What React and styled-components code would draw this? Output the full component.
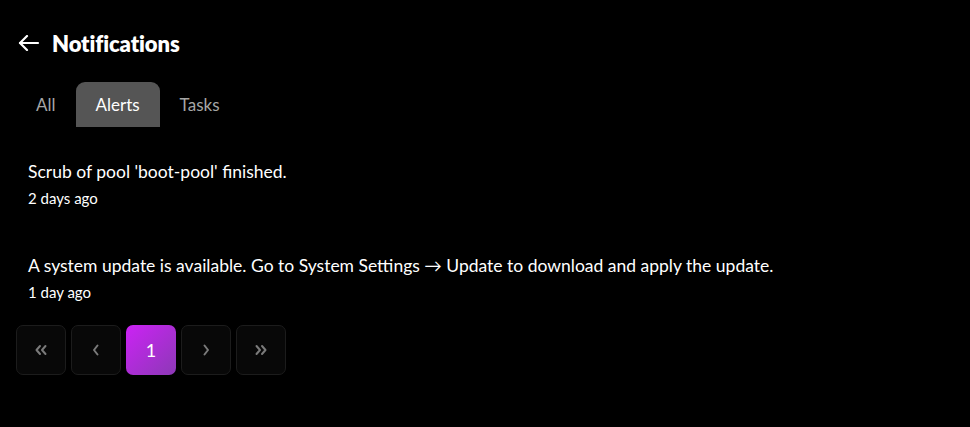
import React, { useState } from 'react'
import styled, { createGlobalStyle, css } from 'styled-components'

const GlobalStyle = createGlobalStyle`
  html, body {
    margin: 0;
    padding: 0;
    background: #000;
  }
  body {
    font-family: Lato, "Open Sans", sans-serif;
    color: #fff;
  }
`

const Page = styled.div`
  padding: 28px 16px 0 16px;
  min-height: 427px;
  box-sizing: border-box;
`

const Header = styled.div`
  display: flex;
  align-items: center;
  gap: 12px;
  padding-left: 2px;
  height: 30px;
`

const Title = styled.h1`
  margin: 0;
  font-size: 22px;
  font-weight: 800;
  letter-spacing: -0.1px;
  color: #fff;
`

const BackButton = styled.button`
  background: none;
  border: none;
  padding: 0;
  display: flex;
  cursor: pointer;
  color: #fff;
`

const TabBar = styled.div`
  display: flex;
  margin-top: 24px;
`

const Tab = styled.button`
  border: none;
  background: transparent;
  font-family: inherit;
  font-size: 17px;
  color: #a6a6a6;
  height: 45px;
  padding: 0 20px;
  border-radius: 9px 9px 0 0;
  cursor: pointer;

  ${props =>
    props.active &&
    css`
      background: #555;
      color: #fff;
    `}
`

const List = styled.div`
  display: flex;
  flex-direction: column;
  padding: 35px 12px 0;
  gap: 50px;
`

const Item = styled.div`
  display: flex;
  flex-direction: column;
  gap: 8px;
`

const Message = styled.div`
  font-size: 17.5px;
  color: #fff;
  line-height: 20px;
`

const Time = styled.div`
  font-size: 15px;
  color: #fff;
  line-height: 16px;
`

const Pager = styled.div`
  display: flex;
  gap: 5px;
  margin-top: 25px;
`

const PageButton = styled.button`
  width: 50px;
  height: 50px;
  border-radius: 7px;
  border: 1px solid #1c1c1c;
  background: #080808;
  color: #7a7a7a;
  display: flex;
  align-items: center;
  justify-content: center;
  font-family: inherit;
  font-size: 18px;
  padding: 0;
  cursor: pointer;

  ${props =>
    props.active &&
    css`
      border: none;
      color: #fff;
      background: linear-gradient(135deg, #cc22f5 0%, #8c39b6 100%);
    `}
`

const ArrowLeft = () => (
  <svg width="22" height="16" viewBox="0 0 22 16" fill="none" stroke="currentColor" strokeWidth="2.2" strokeLinecap="round" strokeLinejoin="round">
    <path d="M9 1 2 8l7 7" />
    <path d="M2 8h18" />
  </svg>
)

const Chevron = ({ dir = 'left', double }) => {
  const flip = dir === 'right' ? 'scale(-1,1) translate(-14,0)' : undefined
  return (
    <svg width="14" height="14" viewBox="0 0 14 14" fill="none" stroke="currentColor" strokeWidth="2" strokeLinecap="round" strokeLinejoin="round">
      <g transform={flip}>
        {double ? (
          <>
            <path d="M6 3 2.5 7 6 11" />
            <path d="M11.5 3 8 7l3.5 4" />
          </>
        ) : (
          <path d="M8.5 2.5 5 7l3.5 4.5" />
        )}
      </g>
    </svg>
  )
}

const notifications = [
  { id: 1, text: "Scrub of pool 'boot-pool' finished.", time: '2 days ago' },
  {
    id: 2,
    text: 'A system update is available. Go to System Settings → Update to download and apply the update.',
    time: '1 day ago'
  }
]

const tabs = ['All', 'Alerts', 'Tasks']

const App = () => {
  const [tab, setTab] = useState('Alerts')

  return (
    <>
      <GlobalStyle />
      <Page>
        <Header>
          <BackButton aria-label='Back'>
            <ArrowLeft />
          </BackButton>
          <Title>Notifications</Title>
        </Header>
        <TabBar>
          {tabs.map(t => (
            <Tab key={t} active={t === tab} onClick={() => setTab(t)}>
              {t}
            </Tab>
          ))}
        </TabBar>
        <List>
          {notifications.map(n => (
            <Item key={n.id}>
              <Message>{n.text}</Message>
              <Time>{n.time}</Time>
            </Item>
          ))}
        </List>
        <Pager>
          <PageButton><Chevron double /></PageButton>
          <PageButton><Chevron /></PageButton>
          <PageButton active>1</PageButton>
          <PageButton><Chevron dir='right' /></PageButton>
          <PageButton><Chevron dir='right' double /></PageButton>
        </Pager>
      </Page>
    </>
  )
}

export default App
